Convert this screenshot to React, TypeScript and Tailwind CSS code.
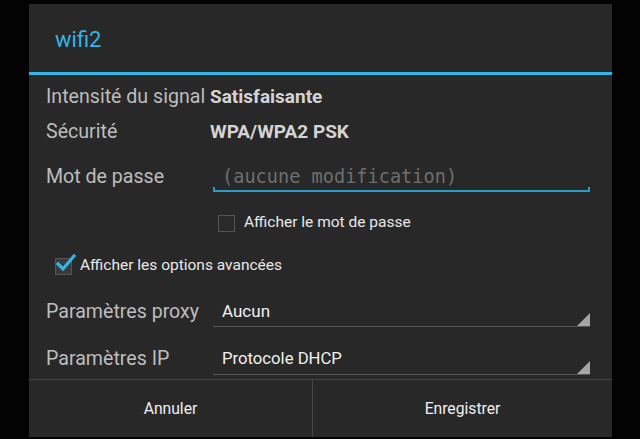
import React from "react";

function Triangle() {
  return (
    <svg className="absolute right-0 bottom-0" width="13" height="13" viewBox="0 0 13 13">
      <polygon points="13,0 13,13 0,13" fill="#a6a6a6" />
    </svg>
  );
}

export default function App() {
  return (
    <div
      className="w-[640px] h-[439px] bg-[#030303] overflow-hidden relative"
      style={{ fontFamily: "Roboto, 'Liberation Sans', sans-serif" }}
    >
      <div className="absolute left-[29px] top-[4px] w-[583px] h-[433px] bg-[#282828] flex flex-col">
        {/* Title */}
        <div className="h-[68px] shrink-0 flex items-center pl-[26px] pt-[4px]">
          <span className="text-[22px] text-[#33b5e5] leading-none">wifi2</span>
        </div>
        <div className="h-[3px] shrink-0 bg-[#33b5e5]" />

        {/* Content */}
        <div className="h-[304px] shrink-0 overflow-hidden flex flex-col pl-[17px] pr-[22px]">
          <div className="h-[44px] shrink-0 flex items-center">
            <span className="w-[164px] text-[19.6px] text-[#bdbdbd] whitespace-nowrap">Intensité du signal</span>
            <span className="text-[19px] font-bold text-[#d4d4d4]">Satisfaisante</span>
          </div>
          <div className="h-[26px] shrink-0 flex items-center">
            <span className="w-[164px] text-[19.6px] text-[#bdbdbd]">Sécurité</span>
            <span className="text-[19px] font-bold text-[#d4d4d4]">WPA/WPA2 PSK</span>
          </div>
          <div className="h-[64px] shrink-0 flex items-center">
            <span className="w-[167px] text-[19.6px] text-[#bdbdbd]">Mot de passe</span>
            <div className="relative flex-1 h-[32px] flex items-center pl-[9px]">
              <span
                className="text-[18.6px] text-[#6f6f6f] whitespace-nowrap"
                style={{ fontFamily: "'DejaVu Sans Mono', 'Liberation Mono', monospace" }}
              >
                (aucune modification)
              </span>
              <div className="absolute left-0 right-0 bottom-[1px] h-[5px] border-x-2 border-b-2 border-[#2a9ccb]" />
            </div>
          </div>
          <div className="h-[28px] shrink-0 flex items-center pl-[172px]">
            <div className="w-[17px] h-[17px] border-[1.5px] border-[#555555] bg-[#2a2a2a]" />
            <span className="ml-[9px] text-[15.5px] text-[#e8e8e8]">Afficher le mot de passe</span>
          </div>
          <div className="h-[58px] shrink-0 flex items-center pl-[9px]">
            <div className="relative w-[17px] h-[17px] border-[1.5px] border-[#555555] bg-[#3a3a3a]">
              <svg className="absolute left-[-1px] top-[-5px]" width="22" height="20" viewBox="0 0 22 20">
                <path d="M3 10 L8 15 L19 2" fill="none" stroke="#33b5e5" strokeWidth="3.2" strokeLinecap="square" />
              </svg>
            </div>
            <span className="ml-[8px] text-[15.5px] text-[#e8e8e8]">Afficher les options avancées</span>
          </div>
          <div className="h-[34px] shrink-0 flex items-center">
            <span className="w-[167px] text-[19.6px] text-[#bdbdbd] whitespace-nowrap">Paramètres proxy</span>
            <div className="relative flex-1 h-[30px] flex items-center pl-[9px] border-b border-[#565656]">
              <span className="text-[17px] text-[#f0f0f0]">Aucun</span>
              <Triangle />
            </div>
          </div>
          <div className="h-[60px] shrink-0 flex items-center">
            <span className="w-[167px] text-[19.6px] text-[#bdbdbd] whitespace-nowrap">Paramètres IP</span>
            <div className="relative flex-1 h-[32px] flex items-center pl-[9px] border-b border-[#565656]">
              <span className="text-[16.7px] text-[#f0f0f0]">Protocole DHCP</span>
              <Triangle />
            </div>
          </div>
        </div>

        {/* Buttons */}
        <div className="flex-1 flex border-t border-[#474747]">
          <div className="w-[283px] flex items-center justify-center text-[15.7px] text-[#f0f0f0]">Annuler</div>
          <div className="w-px bg-[#474747]" />
          <div className="flex-1 flex items-center justify-center text-[15.7px] text-[#f0f0f0]">Enregistrer</div>
        </div>
      </div>
    </div>
  );
}
